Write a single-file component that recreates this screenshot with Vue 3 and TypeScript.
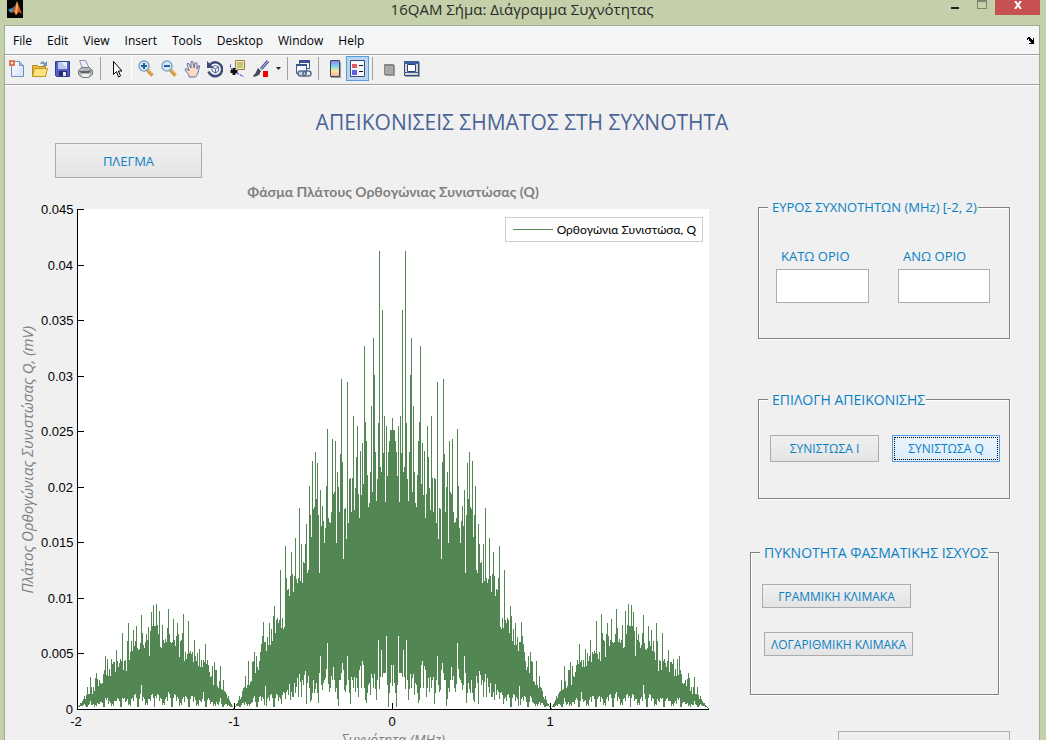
<script setup lang="ts">
import { ref } from 'vue'

const menus: string[] = ['File', 'Edit', 'View', 'Insert', 'Tools', 'Desktop', 'Window', 'Help']
const yTicks: string[] = ['0.045', '0.04', '0.035', '0.03', '0.025', '0.02', '0.015', '0.01', '0.005', '0']
const xTicks: string[] = ['-2', '-1', '0', '1']

const lower = ref('')
const upper = ref('')
const component = ref<'I' | 'Q'>('Q')

const AXIS_Y = 709
const CENTER = 315

// Upper envelope of the spectrum, from zero frequency outwards; the spectrum is symmetric.
const tops: number[] = [
  418, 430, 430, 441, 452, 476, 426, 502, 416, 453, 310, 472, 467, 251, 423, 479, 501, 452, 375, 338,
  492, 406, 472, 503, 507, 475, 441, 422, 346, 484, 443, 495, 451, 518, 494, 426, 457, 488, 510, 416,
  478, 512, 478, 479, 523, 382, 539, 508, 509, 559, 462, 379, 454, 512, 487, 472, 543, 441, 492, 494,
  439, 512, 523, 522, 518, 429, 486, 528, 543, 521, 506, 526, 490, 573, 515, 463, 499, 452, 507, 509,
  461, 537, 515, 486, 570, 573, 524, 544, 563, 562, 583, 544, 581, 508, 578, 583, 579, 538, 576, 592,
  574, 552, 576, 596, 589, 590, 578, 546, 627, 629, 618, 628, 570, 620, 623, 618, 620, 633, 606, 616,
  641, 629, 645, 623, 645, 637, 651, 642, 642, 622, 636, 644, 652, 661, 670, 667, 656, 673, 652, 661,
  662, 681, 682, 685, 661, 685, 688, 676, 687, 688, 691, 697, 699, 696, 700, 703, 704, 706, 708, 708,
  706, 704, 702, 700, 696, 698, 694, 692, 691, 680, 690, 689, 666, 681, 688, 686, 670, 670, 662, 685,
  666, 676, 677, 672, 665, 660, 664, 644, 662, 660, 667, 660, 667, 649, 666, 653, 661, 656, 640, 662,
  652, 654, 651, 653, 621, 654, 659, 652, 661, 614, 633, 640, 641, 657, 634, 623, 636, 646, 640, 619,
  642, 643, 642, 634, 609, 628, 642, 639, 643, 640, 625, 648, 647, 611, 634, 625, 604, 626, 626, 605,
  626, 612, 631, 656, 627, 640, 634, 642, 648, 645, 633, 615, 643, 649, 650, 648, 626, 641, 646, 630,
  651, 641, 652, 660, 623, 641, 671, 660, 661, 670, 633, 661, 659, 663, 667, 661, 650, 672, 662, 662,
  664, 659, 676, 669, 676, 659, 675, 656, 670, 674, 683, 684, 683, 680, 686, 679, 673, 678, 691, 687,
  694, 687, 677, 694, 694, 687, 695, 699, 696, 699, 701, 703, 703, 705, 706, 707, 708,
]

// Lower envelope of the inner part of the main lobe.
const innerBottoms: number[] = [
  686, 665, 683, 693, 707, 685, 636, 673, 673, 673, 677, 650, 677, 689, 640, 680, 700, 689, 674, 688,
  678, 674, 695, 683, 685, 693, 703, 700, 688, 665, 661, 688, 666, 670, 697, 688, 678, 692, 677, 688,
  680, 677, 704, 693, 680, 656, 685, 692, 690, 670, 663, 673, 680, 680, 706, 699, 688, 692, 680, 667,
  680, 676, 688, 692, 684, 643, 669, 678, 680, 683, 690, 685, 656, 673, 703, 693, 683, 689, 693, 680,
  693, 700, 702, 688, 676, 683, 704, 671, 675, 685, 680, 697, 682, 674, 697, 678, 687, 693, 683, 697,
  697, 692, 700, 684, 695, 690, 692, 699, 693, 692, 695, 704,
]
const notches: Record<number, number> = { 127: 686, 189: 692, 224: 692, 237: 696, 251: 685, 287: 698 }

function bottomAt(d: number): number {
  if (d < innerBottoms.length) return innerBottoms[d]
  if (notches[d] !== undefined) return notches[d]
  const noise = ((d * 7919 + d * d * 31) % 17) / 16
  const reach = (AXIS_Y - tops[d]) * 0.2
  return Math.round(AXIS_Y - 2 - Math.min(reach, 13) * noise)
}

function spectrumPath(): string {
  const parts: string[] = []
  for (let x = 1; x < 632; x++) {
    const d = Math.abs(x - CENTER)
    const top = tops[d] - 209
    const bottom = Math.max(bottomAt(d) - 209, top + 1)
    parts.push(`M${x} ${top}h1V${bottom}h-1z`)
  }
  return parts.join('')
}

const spectrum = spectrumPath()
const yTickPath = yTicks.map((_, i) => `M0 ${Math.round((i * 500) / 9)}h7v1h-7z`).join('')
const xTickPath = [0, 157, 315, 473].map((x) => `M${x} 494h1v7h-1z`).join('')
</script>

<template>
  <div class="window">
    <header class="titlebar">
      <svg class="logo" viewBox="0 0 16 18" aria-hidden="true">
        <rect width="16" height="18" fill="#050505" />
        <path d="M1 10l4-2 2 2-3 3z" fill="#3f9cc0" />
        <path d="M5 8l3-2 2-4-1 8-3 2z" fill="#5d6e78" />
        <path d="M4 13l3-3 3-9 2 5 3 8-3-2-3 3-2-3z" fill="#d8571c" />
        <path d="M10 1l1 5-1 7-1 2-1-3z" fill="#f3b35a" />
      </svg>
      <span class="title">16QAM Σήμα: Διάγραμμα Συχνότητας</span>
      <div class="controls">
        <button class="minimize" type="button" aria-label="Minimize"></button>
        <button class="maximize" type="button" aria-label="Maximize"></button>
        <button class="close" type="button" aria-label="Close">
          <svg viewBox="0 0 8 8" aria-hidden="true"><path d="M1 0l6 8M7 0l-6 8" stroke="#fff" stroke-width="2" /></svg>
        </button>
      </div>
    </header>

    <div class="frame">
      <nav class="menubar">
        <button v-for="m in menus" :key="m" type="button">{{ m }}</button>
        <svg class="dock" viewBox="0 0 7 7" shape-rendering="crispEdges" aria-hidden="true">
          <path d="M0 1h1v-1h2v1h1v1h1v1h1v-2h1v6h-5v-1h2v-1h-1v-1h-1v-2h-1v1h-1z" fill="#000" />
        </svg>
      </nav>

      <div class="toolbar">
        <button type="button" aria-label="New figure">
          <svg viewBox="0 0 16 18"><defs><linearGradient id="pg" x2="1" y2="1"><stop stop-color="#fff" /><stop offset="1" stop-color="#cfe0f6" /></linearGradient></defs><path d="M2.500 1.500h8l4 4v11h-12z" fill="url(#pg)" stroke="#6f8fc0" /><path d="M10.500 1.500v4h4" fill="#a9c0e2" stroke="#6f8fc0" /><path d="M0 0h6v6h-6z" fill="#e2795a" /><path d="M2 2h2v2h-2z" fill="#fbe3a0" /></svg>
        </button>
        <button type="button" aria-label="Open file">
          <svg viewBox="0 0 16 18"><path d="M8 4q2-5 5-1l2-2v5h-5l2-1q-1-2-2-1z" fill="#7b95b8" /><path d="M.5 16.500v-11h5l1 1h7v10z" fill="#e5bd42" stroke="#b78a20" /><path d="M.5 16.500l2-8h13l-2 8z" fill="#fae27d" stroke="#c09528" /></svg>
        </button>
        <button type="button" aria-label="Save">
          <svg viewBox="0 0 16 18"><path d="M.5 1.500h14v15h-13l-1-1z" fill="#5260c8" stroke="#343a98" /><path d="M3 2h9v7h-9z" fill="#e9edfb" /><path d="M3 2h3l6 6v1h-9z" fill="#bcc7ee" /><path d="M4 11h8v5h-8z" fill="#282b68" /><path d="M8 12h3v4h-3z" fill="#e7e9f3" /></svg>
        </button>
        <button type="button" aria-label="Print">
          <svg viewBox="0 0 16 18"><path d="M4.500 8.500l-3-8h6l4 8z" fill="#e9eff8" stroke="#8a94a5" /><path d="M.5 10.500l3-3h8l3 3v4l-4 3h-6l-4-3z" fill="#b5b8bd" stroke="#74787e" /><path d="M1 11h8l5-1-3 3h-8z" fill="#61656a" /><path d="M3 14h9l-2 3h-5z" fill="#eee" /><path d="M11 12h2v1h-2z" fill="#6fb764" /></svg>
        </button>
        <i class="separator"></i>
        <button type="button" aria-label="Edit plot">
          <svg viewBox="0 0 16 18"><path d="M4.500 1.500v13l3-3 2 5.500 2-1-2-5h3.500z" fill="#fff" stroke="#000" /></svg>
        </button>
        <i class="separator light"></i>
        <button type="button" aria-label="Zoom in">
          <svg viewBox="0 0 16 18"><path d="M9 9.500l5.500 6" stroke="#d2963d" stroke-width="3.500" /><path d="M10 9.500l5 5" stroke="#f4cb75" /><circle cx="6" cy="6" r="5" fill="#d5ecfa" stroke="#83a7ca" stroke-width="1.500" /><path d="M3 6h6M6 3v6" stroke="#2d5b9b" stroke-width="2" /></svg>
        </button>
        <button type="button" aria-label="Zoom out">
          <svg viewBox="0 0 16 18"><path d="M9 9.500l5.500 6" stroke="#d2963d" stroke-width="3.500" /><path d="M10 9.500l5 5" stroke="#f4cb75" /><circle cx="6" cy="6" r="5" fill="#d5ecfa" stroke="#83a7ca" stroke-width="1.500" /><path d="M3 6h6" stroke="#2d5b9b" stroke-width="2" /></svg>
        </button>
        <button type="button" aria-label="Pan">
          <svg viewBox="0 0 16 18"><path d="M5 17v-2l-4-5q0-2 2-1l2 2-2-7q1-2 2 0l2 4v-6q1-2 2 0l1 6 1-5q2-1 2 1v5l1-3q2-1 1.500 1l-2 7-2 3z" fill="#fbdcc0" stroke="#5a74b0" /></svg>
        </button>
        <button type="button" aria-label="Rotate 3D">
          <svg viewBox="0 0 16 18"><path d="M3 4.500a7 7 0 1 1-1.500 7" fill="none" stroke="#3b4c74" stroke-width="2.500" /><path d="M0 1v7h7z" fill="#3b4c74" /><path d="M5 7l3.500-1.500 3 1.500v4l-3 2-3.500-2zM5 7l3.500 2 3-2M8.500 9v4" fill="#eef2fa" stroke="#5a6c94" /></svg>
        </button>
        <button type="button" aria-label="Data cursor">
          <svg viewBox="0 0 16 18"><path d="M0 4q1 7 5 8.500t9 4.500" fill="none" stroke="#2222ee" stroke-dasharray="3 1" /><path d="M5.500 .5h9v9h-7l-2-2z" fill="#f5efa5" stroke="#8b854c" /><path d="M7 3h6M7 5h6M7 7h6" stroke="#9d975e" /><path d="M4 8v7M.5 11.500h7" stroke="#111" stroke-width="3" /></svg>
        </button>
        <button type="button" aria-label="Brush data">
          <svg viewBox="0 0 16 18"><path d="M15 1l-7 8" stroke="#4a5799" stroke-width="3" /><path d="M15 1l-7 8" stroke="#c3caec" /><path d="M5 8l3 3-2 4-5 2q-2-1 1-3z" fill="#474a50" /><path d="M10 11h5v6h-5z" fill="#f40000" /></svg>
        </button>
        <button class="drop" type="button" aria-label="Brush options">
          <svg viewBox="0 0 5 3"><path d="M0 0h5l-2.500 3z" fill="#222" /></svg>
        </button>
        <i class="separator"></i>
        <button type="button" aria-label="Link plot">
          <svg viewBox="0 0 16 18"><path d="M3.500 .5h10v8h-10z" fill="#fff" stroke="#44598c" /><path d="M3 0h11v3h-11z" fill="#395390" /><path d="M.5 4.500h10v9h-10z" fill="#f4f7fb" stroke="#44598c" /><path d="M0 4h11v2h-11z" fill="#395390" /><rect x="2" y="11" width="8" height="5" rx="2.500" fill="#c5d0dc" stroke="#59718d" stroke-width="1.500" /><rect x="7" y="11" width="8" height="5" rx="2.500" fill="none" stroke="#59718d" stroke-width="1.500" /></svg>
        </button>
        <i class="separator"></i>
        <button type="button" aria-label="Insert colorbar">
          <svg viewBox="0 0 16 18"><defs><linearGradient id="cb" x2="0" y2="1"><stop stop-color="#8a7de8" /><stop offset=".35" stop-color="#83d5e8" /><stop offset=".65" stop-color="#f6e99a" /><stop offset="1" stop-color="#f7aa91" /></linearGradient></defs><path d="M4 2h10v16h-10z" fill="#9a9ca3" /><path d="M3.500 .5h9v16h-9z" fill="url(#cb)" stroke="#36476e" /></svg>
        </button>
        <button class="pressed" type="button" aria-label="Insert legend" aria-pressed="true">
          <svg viewBox="0 0 16 18"><path d="M.5 .5h14v16h-14z" fill="#f8f9ff" stroke="#334a7c" /><path d="M2 4h5v4h-5z" fill="#e35c60" /><path d="M2 10h5v5h-5z" fill="#6060df" /><path d="M9 5.500h4M9 11.500h4" stroke="#111" /></svg>
        </button>
        <i class="separator"></i>
        <button type="button" aria-label="Hide plot tools">
          <svg viewBox="0 0 16 18"><path d="M4 5h10v11h-10z" fill="#999" /><path d="M3.500 4.500h9v10h-9z" fill="#a9a9a9" stroke="#858585" /><path d="M4 5h9v1h-9z" fill="#858585" /></svg>
        </button>
        <button type="button" aria-label="Show plot tools and dock figure">
          <svg viewBox="0 0 16 18"><path d="M1 2h15v15h-15z" fill="#9ca2a9" /><path d="M.5 1.500h14v14h-14z" fill="#d6dacb" stroke="#2c447c" /><path d="M0 1h15v3h-15zM0 12h15v1h-15z" fill="#3f5da0" /><path d="M3.500 4.500h8v7h-8z" fill="#fff" stroke="#2c447c" /></svg>
        </button>
      </div>

      <main class="figure">
        <h1>ΑΠΕΙΚΟΝΙΣΕΙΣ ΣΗΜΑΤΟΣ ΣΤΗ ΣΥΧΝΟΤΗΤΑ</h1>
        <div class="content">
          <section class="chart">
            <button class="push grid-toggle" type="button">ΠΛΕΓΜΑ</button>
            <h2>Φάσμα Πλάτους Ορθογώνιας Συνιστώσας (Q)</h2>
            <div class="ylabel"><span>Πλάτος Ορθογώνιας Συνιστώσας Q, (mV)</span></div>
            <div class="yticks"><span v-for="t in yTicks" :key="t">{{ t }}</span></div>
            <div class="plot">
              <svg viewBox="0 0 632 501" preserveAspectRatio="none" shape-rendering="crispEdges" role="img" aria-label="Φάσμα">
                <rect width="632" height="501" fill="#fff" />
                <path :d="spectrum" fill="#528652" />
                <path d="M0 0h1v500h631v1H0z" fill="#000" />
                <path :d="yTickPath" fill="#000" />
                <path :d="xTickPath" fill="#000" />
              </svg>
              <div class="key"><i></i>Ορθογώνια Συνιστώσα, Q</div>
            </div>
            <div class="xticks"><span v-for="t in xTicks" :key="t">{{ t }}</span></div>
            <p class="xlabel">Συχνότητα (MHz)</p>
          </section>

          <aside class="panels">
            <fieldset class="range">
              <legend>ΕΥΡΟΣ ΣΥΧΝΟΤΗΤΩΝ (MHz) [-2, 2)</legend>
              <label for="lower">ΚΑΤΩ ΟΡΙΟ</label>
              <label for="upper">ΑΝΩ ΟΡΙΟ</label>
              <input id="lower" v-model="lower" type="text" />
              <input id="upper" v-model="upper" type="text" />
            </fieldset>
            <fieldset class="display">
              <legend>ΕΠΙΛΟΓΗ ΑΠΕΙΚΟΝΙΣΗΣ</legend>
              <button class="push" :class="{ focused: component === 'I' }" type="button" @click="component = 'I'">ΣΥΝΙΣΤΩΣΑ Ι</button>
              <button class="push" :class="{ focused: component === 'Q' }" type="button" @click="component = 'Q'">ΣΥΝΙΣΤΩΣΑ Q</button>
            </fieldset>
            <fieldset class="density">
              <legend>ΠΥΚΝΟΤΗΤΑ ΦΑΣΜΑΤΙΚΗΣ ΙΣΧΥΟΣ</legend>
              <button class="push" type="button">ΓΡΑΜΜΙΚΗ ΚΛΙΜΑΚΑ</button>
              <button class="push log" type="button">ΛΟΓΑΡΙΘΜΙΚΗ ΚΛΙΜΑΚΑ</button>
            </fieldset>
            <button class="push exit" type="button" aria-label="Επιστροφή"></button>
          </aside>
        </div>
      </main>
    </div>
  </div>
</template>

<style>
body {
  background: #c3d0a9;
}
</style>

<style scoped>
* {
  box-sizing: border-box;
}
.window {
  display: flex;
  flex-direction: column;
  height: 100vh;
  padding: 0 6px 0 4px;
  overflow: hidden;
  background: #c3d0a9;
  color: #000;
  font-family: "Open Sans", "Noto Sans", sans-serif;
}
button {
  margin: 0;
  padding: 0;
  border: 0;
  background: none;
  font: inherit;
  color: inherit;
}
.titlebar {
  display: grid;
  grid-template-columns: 1fr auto 1fr;
  flex: none;
  height: 25px;
}
.logo {
  width: 16px;
  height: 18px;
  margin-left: 3px;
}
.title {
  font-size: 15px;
  line-height: 19px;
  color: #2b2b2b;
}
.controls {
  display: flex;
  justify-content: flex-end;
  align-items: flex-start;
}
.minimize {
  width: 8px;
  height: 9px;
  margin-right: 18px;
  border-bottom: 2px solid #222;
}
.maximize {
  width: 10px;
  height: 9px;
  margin-right: 8px;
  border: 1px solid #7d8470;
  border-top-width: 2px;
}
.close {
  display: flex;
  justify-content: center;
  width: 45px;
  height: 15px;
  padding-top: 1px;
  background: #c75050;
}
.close svg {
  width: 8px;
  height: 8px;
}
.frame {
  flex: 1;
  min-height: 0;
  overflow: hidden;
  border: 1px solid #a2ad8d;
  border-bottom: 0;
  background: #f0f0f0;
}
.menubar {
  display: flex;
  align-items: center;
  gap: 15px;
  height: 28px;
  padding: 0 5px 0 8px;
  background: #f5f6f8;
  font-size: 12px;
}
.dock {
  width: 7px;
  height: 7px;
  margin-left: auto;
}
.toolbar {
  display: flex;
  align-items: center;
  height: 31px;
  border-top: 1px solid #9f9f9f;
  border-bottom: 1px solid #9f9f9f;
  box-shadow: inset 0 1px #fff, 0 1px #fff;
  padding-bottom: 2px;
}
.toolbar button {
  display: flex;
  align-items: center;
  justify-content: center;
  flex: none;
  width: 23px;
  height: 25px;
}
.toolbar svg {
  width: 16px;
  height: 18px;
}
.toolbar .drop {
  width: 12px;
}
.toolbar .drop svg {
  width: 5px;
  height: 3px;
}
.toolbar .pressed {
  border: 1px solid #559be0;
  background: #b9d5ef;
}
.separator {
  width: 1px;
  height: 23px;
  margin: 0 4px 0 3px;
  background: #a0a0a0;
}
.light {
  margin-right: 2px;
  background: #fff;
}
.figure {
  padding-top: 22px;
}
h1 {
  margin: 0;
  font-size: 21px;
  font-weight: 400;
  line-height: 30px;
  text-align: center;
  color: #4a6496;
}
.content {
  display: grid;
  grid-template-columns: minmax(0, 1fr) 330px;
  margin-top: 6px;
}
.chart {
  display: grid;
  grid-template-columns: 36px 36px minmax(0, 1fr);
  grid-template-rows: 35px 31px 501px 21px 24px;
}
.push {
  border: 1px solid #acacac;
  background: linear-gradient(#f0f0f0, #e4e4e4);
  font-size: 12px;
  color: #0a80c4;
}
.grid-toggle {
  grid-column: 1 / 4;
  width: 147px;
  margin-left: 50px;
  font-size: 13px;
}
h2 {
  grid-column: 3;
  margin: 0;
  font-family: Lato, "Open Sans", sans-serif;
  font-size: 14px;
  font-weight: 700;
  line-height: 28px;
  text-align: center;
  color: #808080;
}
.ylabel {
  grid-column: 1;
  display: flex;
  align-items: center;
  justify-content: center;
  padding-left: 8px;
}
.ylabel span {
  writing-mode: vertical-rl;
  transform: rotate(180deg);
  white-space: nowrap;
  font-size: 15px;
  font-style: italic;
  line-height: 18px;
  color: #808080;
}
.yticks {
  grid-column: 2;
  display: flex;
  flex-direction: column;
  justify-content: space-between;
  height: 517px;
  margin-top: -8px;
  padding-right: 4px;
  font: 13px/17px "Liberation Sans", sans-serif;
  text-align: right;
}
.plot {
  grid-column: 3;
  position: relative;
}
.plot svg {
  display: block;
  width: 100%;
  height: 501px;
}
.key {
  position: absolute;
  top: 8px;
  right: 6px;
  display: flex;
  align-items: center;
  gap: 4px;
  height: 25px;
  padding: 0 6px 0 7px;
  border: 1px solid #ccc;
  background: #fff;
  font-family: Lato, "Open Sans", sans-serif;
  font-size: 12px;
  white-space: nowrap;
}
.key i {
  width: 40px;
  height: 1px;
  background: #528652;
}
.xticks {
  grid-column: 3;
  display: grid;
  grid-template-columns: repeat(4, 1fr);
  margin-left: -13px;
  margin-right: 13px;
  font: 13px/24px "Liberation Sans", sans-serif;
}
.xticks span {
  width: 24px;
  text-align: center;
}
.xlabel {
  grid-column: 3;
  margin: 0;
  font-size: 14px;
  font-style: italic;
  line-height: 18px;
  text-align: center;
  color: #808080;
}
.panels {
  padding: 56px 0 0 49px;
}
fieldset {
  width: 252px;
  min-width: 0;
  margin: 0;
  border: 1px solid #808080;
  box-shadow: 1px 1px #fff, inset 1px 1px #fff;
}
legend {
  margin: 0;
  padding: 0 1px 0 4px;
  background: #f0f0f0;
  font-size: 14px;
  line-height: 17px;
  white-space: nowrap;
  color: #0a80c4;
}
.range {
  display: grid;
  grid-template-columns: 93px 92px;
  column-gap: 29px;
  padding: 31px 17px 35px;
}
.range legend {
  margin-left: -8px;
  font-size: 13px;
}
.range label {
  padding-left: 5px;
  font-size: 13px;
  line-height: 18px;
  color: #0a80c4;
}
.range input {
  width: 100%;
  height: 34px;
  margin: 4px 0 0;
  padding: 0 6px;
  border: 1px solid #abadb3;
  background: #fff;
  font: inherit;
  outline: 0;
}
.display {
  display: grid;
  grid-template-columns: 109px 108px;
  column-gap: 13px;
  margin-top: 52px;
  padding: 27px 9px 36px 11px;
}
.display .push {
  height: 27px;
}
.display legend {
  margin-left: -2px;
}
.push.focused {
  border: 1px solid #569de5;
  background: linear-gradient(#ebf4fc, #dcecfc);
  outline: 1px dotted #000;
  outline-offset: -3px;
}
.density {
  width: 249px;
  margin: 45px 0 0 -8px;
  padding: 23px 11px 38px;
}
.density legend {
  margin-left: -2px;
}
.density .push {
  display: block;
  width: 149px;
  height: 24px;
}
.density .log {
  margin: 24px 0 0 2px;
}
.exit {
  width: 172px;
  height: 36px;
  margin: 36px 0 0 80px;
}
</style>
